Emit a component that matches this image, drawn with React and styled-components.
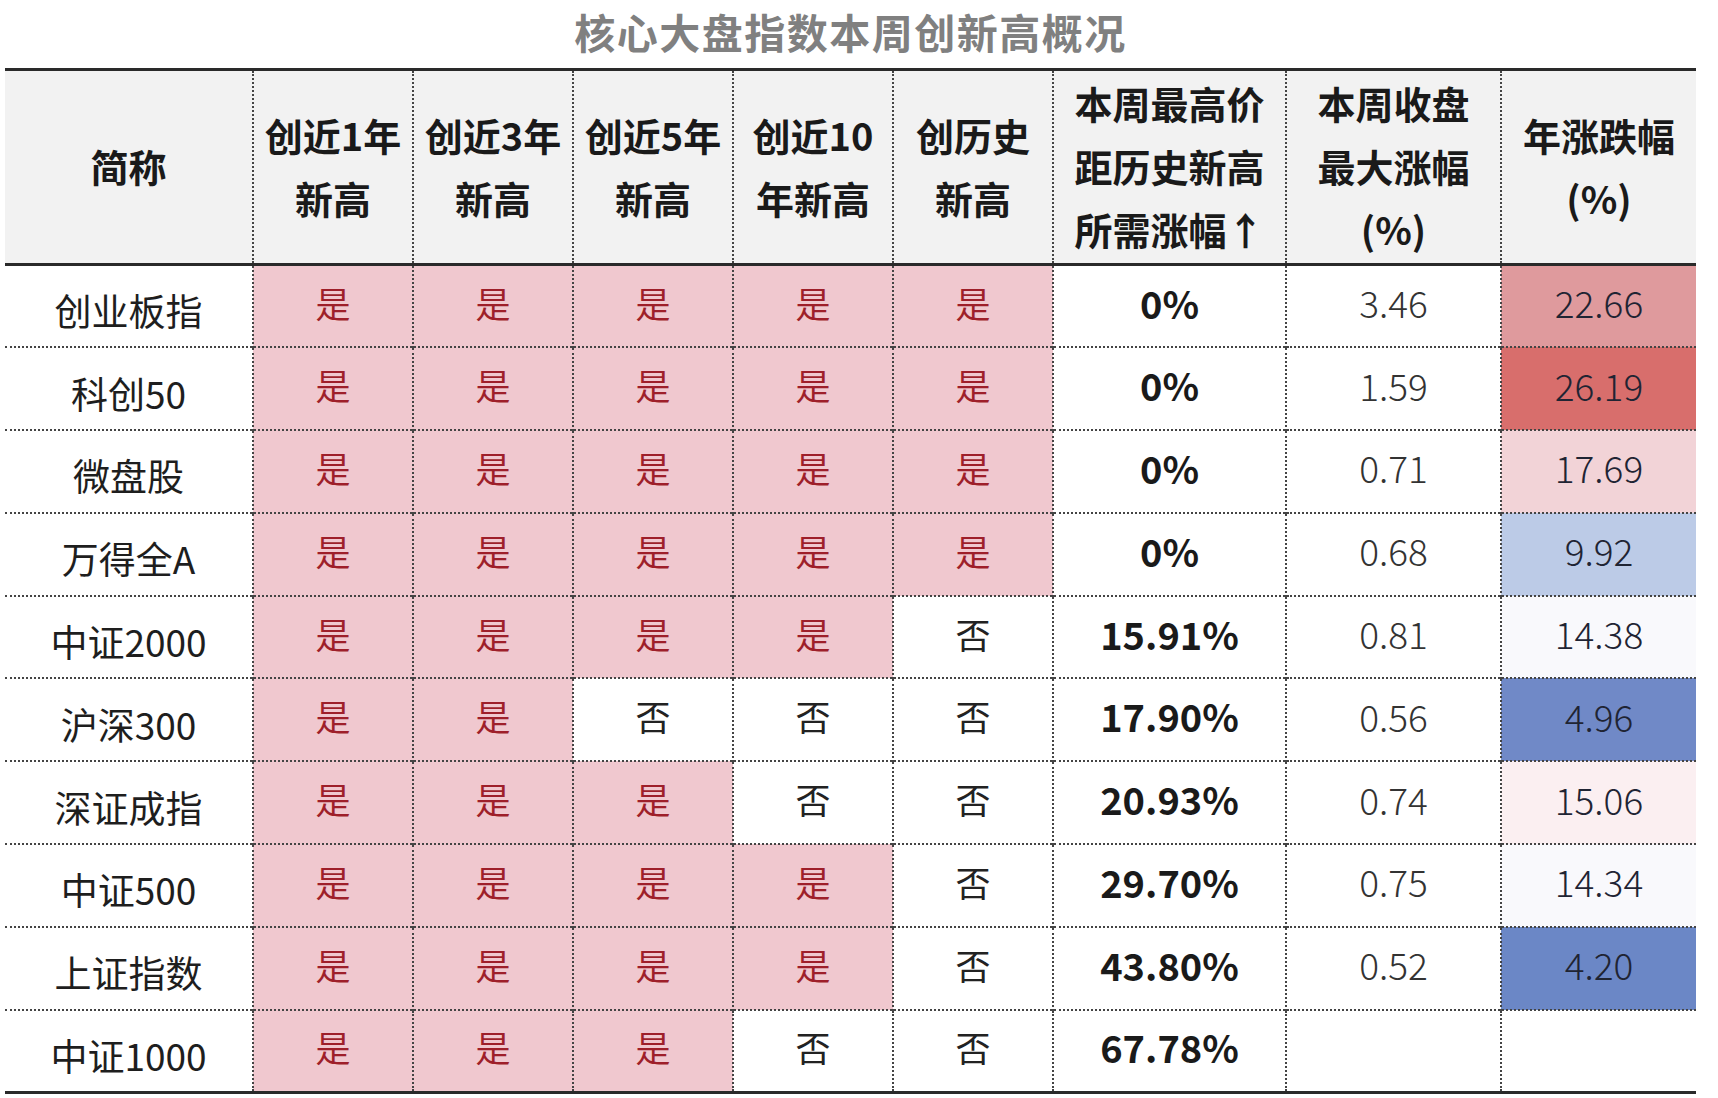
import React from "react";
import styled, { createGlobalStyle } from "styled-components";

const GlobalStyle = createGlobalStyle`
  html, body {
    margin: 0;
    padding: 0;
    background: #ffffff;
  }
  body {
    font-family: "Noto Sans CJK SC", "Noto Sans", sans-serif;
    color: #1a1a1a;
  }
`;

const Page = styled.div`
  width: 1718px;
  padding: 0 0 0 5px;
  box-sizing: border-box;
`;

const Title = styled.h1`
  margin: 0;
  width: 1691px;
  height: 68px;
  line-height: 62px;
  text-align: center;
  font-size: 41px;
  font-weight: 700;
  color: #808080;
  letter-spacing: 1.5px;
`;

const Table = styled.table`
  width: 1691px;
  border-collapse: collapse;
  table-layout: fixed;
  border-top: 3px solid #2a2a2a;
  border-bottom: 3px solid #2a2a2a;
`;

const HeadRow = styled.tr`
  height: 195px;
  background: #f2f2f2;
  border-bottom: 3px solid #2a2a2a;
`;

const HeadCell = styled.th`
  padding: 0 0 3px;
  font-size: 38px;
  font-weight: 700;
  line-height: 63px;
  color: #1a1a1a;
  text-align: center;
  vertical-align: middle;
  border-left: ${(p) => (p.first ? "none" : "2px dotted #444")};
  white-space: nowrap;
`;

const Row = styled.tr`
  height: 82.8px;
  border-top: 2px dotted #444;
`;

const Cell = styled.td`
  padding: 0 0 8px;
  text-align: center;
  vertical-align: middle;
  border-left: 2px dotted #444;
  white-space: nowrap;
`;

const NameCell = styled(Cell)`
  border-left: none;
  font-size: 37px;
  font-weight: 400;
  color: #1e1e1e;
  padding: 8px 0 0;
`;

const FlagCell = styled(Cell)`
  font-size: 35px;
  font-weight: 400;
  background: ${(p) => (p.yes ? "#f0c8cf" : "#ffffff")};
  color: ${(p) => (p.yes ? "#9e1f2a" : "#222222")};
`;

const GapCell = styled(Cell)`
  font-size: 38px;
  font-weight: 600;
  color: #1a1a1a;
`;

const MaxCell = styled(Cell)`
  font-size: 37px;
  font-weight: 300;
  color: #333333;
`;

const YearCell = styled(Cell)`
  font-size: 37px;
  font-weight: 300;
  color: #1f2433;
  background: ${(p) => p.bg};
`;

const headers = [
  ["简称"],
  ["创近1年", "新高"],
  ["创近3年", "新高"],
  ["创近5年", "新高"],
  ["创近10", "年新高"],
  ["创历史", "新高"],
  ["本周最高价", "距历史新高", "所需涨幅↑"],
  ["本周收盘", "最大涨幅", "(%)"],
  ["年涨跌幅", "(%)"],
];

const widths = [248, 160, 160, 160, 160, 160, 233, 215, 195];

const rows = [
  { name: "创业板指", flags: [1, 1, 1, 1, 1], gap: "0%", max: "3.46", year: "22.66", bg: "#df9a9d" },
  { name: "科创50", flags: [1, 1, 1, 1, 1], gap: "0%", max: "1.59", year: "26.19", bg: "#d86e6c" },
  { name: "微盘股", flags: [1, 1, 1, 1, 1], gap: "0%", max: "0.71", year: "17.69", bg: "#f2d3d7" },
  { name: "万得全A", flags: [1, 1, 1, 1, 1], gap: "0%", max: "0.68", year: "9.92", bg: "#bccbe7" },
  { name: "中证2000", flags: [1, 1, 1, 1, 0], gap: "15.91%", max: "0.81", year: "14.38", bg: "#f9f9fc" },
  { name: "沪深300", flags: [1, 1, 0, 0, 0], gap: "17.90%", max: "0.56", year: "4.96", bg: "#7089c7" },
  { name: "深证成指", flags: [1, 1, 1, 0, 0], gap: "20.93%", max: "0.74", year: "15.06", bg: "#fbeff1" },
  { name: "中证500", flags: [1, 1, 1, 1, 0], gap: "29.70%", max: "0.75", year: "14.34", bg: "#f9f9fc" },
  { name: "上证指数", flags: [1, 1, 1, 1, 0], gap: "43.80%", max: "0.52", year: "4.20", bg: "#6b87c6" },
  { name: "中证1000", flags: [1, 1, 1, 0, 0], gap: "67.78%", max: "", year: "", bg: "#ffffff" },
];

export default function App() {
  return (
    <Page>
      <GlobalStyle />
      <Title>核心大盘指数本周创新高概况</Title>
      <Table>
        <colgroup>
          {widths.map((w, i) => (
            <col key={i} style={{ width: w }} />
          ))}
        </colgroup>
        <thead>
          <HeadRow>
            {headers.map((lines, i) => (
              <HeadCell key={i} first={i === 0}>
                {lines.map((l, j) => (
                  <div key={j}>{l}</div>
                ))}
              </HeadCell>
            ))}
          </HeadRow>
        </thead>
        <tbody>
          {rows.map((r) => (
            <Row key={r.name}>
              <NameCell>{r.name}</NameCell>
              {r.flags.map((f, i) => (
                <FlagCell key={i} yes={f === 1}>
                  {f ? "是" : "否"}
                </FlagCell>
              ))}
              <GapCell>{r.gap}</GapCell>
              <MaxCell>{r.max}</MaxCell>
              <YearCell bg={r.bg}>{r.year}</YearCell>
            </Row>
          ))}
        </tbody>
      </Table>
    </Page>
  );
}
